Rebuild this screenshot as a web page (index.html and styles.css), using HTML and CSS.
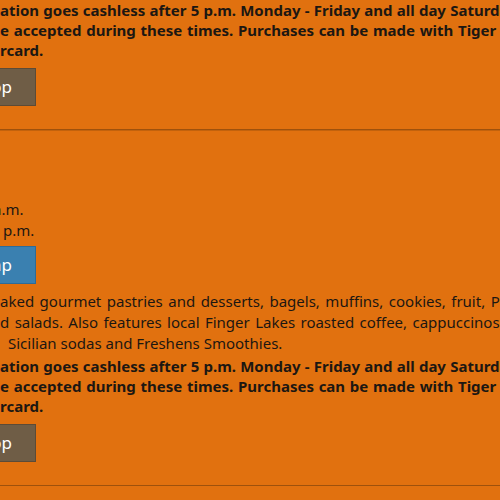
FILE: index.html
```html
<!DOCTYPE html>
<html lang="en">
<head>
    <meta charset="UTF-8">
    <meta name="viewport" content="width=device-width, initial-scale=1.0">
    <title>Dining Locations</title>
    <link rel="stylesheet" href="styles.css">
</head>
<body>
    <div class="page">
        <!-- location: cashless evenings -->
        <section class="location">
            <p class="notice">
                <span class="loose">ation goes cashless after 5 p.m. Monday - Friday and all day Saturday and Sunday.</span><br>
                <span class="looser">e accepted during these times. Purchases can be made with Tiger Bucks or</span><br>
                rcard.
            </p>
            <a class="btn btn-shop" href="#">Shop</a>
        </section>

        <!-- location: cafe -->
        <section class="location cafe">
            <p class="hours">
                <span class="am">a.m.</span><br>
                <span class="pm">p.m.</span>
            </p>
            <a class="btn btn-map" href="#">Map</a>
            <p class="desc">
                <span class="loose-desc">aked gourmet pastries and desserts, bagels, muffins, cookies, fruit, Panini sandwiches</span><br>
                <span class="looser-desc">d salads. Also features local Finger Lakes roasted coffee, cappuccinos, lattes,</span><br>
                <span class="indent">Sicilian sodas and Freshens Smoothies.</span>
            </p>
            <p class="notice">
                <span class="loose">ation goes cashless after 5 p.m. Monday - Friday and all day Saturday and Sunday.</span><br>
                <span class="looser">e accepted during these times. Purchases can be made with Tiger Bucks or</span><br>
                rcard.
            </p>
            <a class="btn btn-shop" href="#">Shop</a>
        </section>
    </div>
</body>
</html>
```

FILE: styles.css
```css
/* General Styles */
body {
    margin: 0;
    background: #e1710f;
    color: #1c1712;
    font-family: "Noto Sans", "Open Sans", sans-serif;
    overflow: hidden;
}

.page {
    white-space: nowrap;
}

p {
    margin: 0;
    font-size: 15px;
}

.loose {
    word-spacing: 0.3px;
}

.looser {
    word-spacing: 0.8px;
}

.loose-desc {
    word-spacing: 1.6px;
}

.looser-desc {
    word-spacing: 1.5px;
}

/* Location blocks */
.location {
    padding-bottom: 23px;
    border-bottom: 1px solid #9e510c;
    box-shadow: 0 1px 0 #c2620d;
}

.cafe {
    padding-top: 69px;
    padding-bottom: 23px;
}

.notice {
    font-weight: bold;
    line-height: 20px;
}

.hours,
.desc {
    line-height: 21px;
}

.am {
    margin-left: -7px;
}

.pm {
    margin-left: 3px;
}

.indent {
    margin-left: 8px;
}

.desc {
    margin-top: 7px;
}

.desc + .notice {
    margin-top: 2px;
}

/* Buttons */
.btn {
    display: block;
    box-sizing: border-box;
    width: 76px;
    height: 38px;
    margin: 8px 0 0 -40px;
    padding-right: 23px;
    border: 1px solid #5c4b37;
    font-size: 17px;
    line-height: 36px;
    text-align: right;
    color: #fff;
    text-decoration: none;
}

.btn-shop {
    background-color: #6f5d46;
}

.btn-map {
    margin-top: 5px;
    background-color: #3a80b0;
    border-color: #2d6b98;
}
```
